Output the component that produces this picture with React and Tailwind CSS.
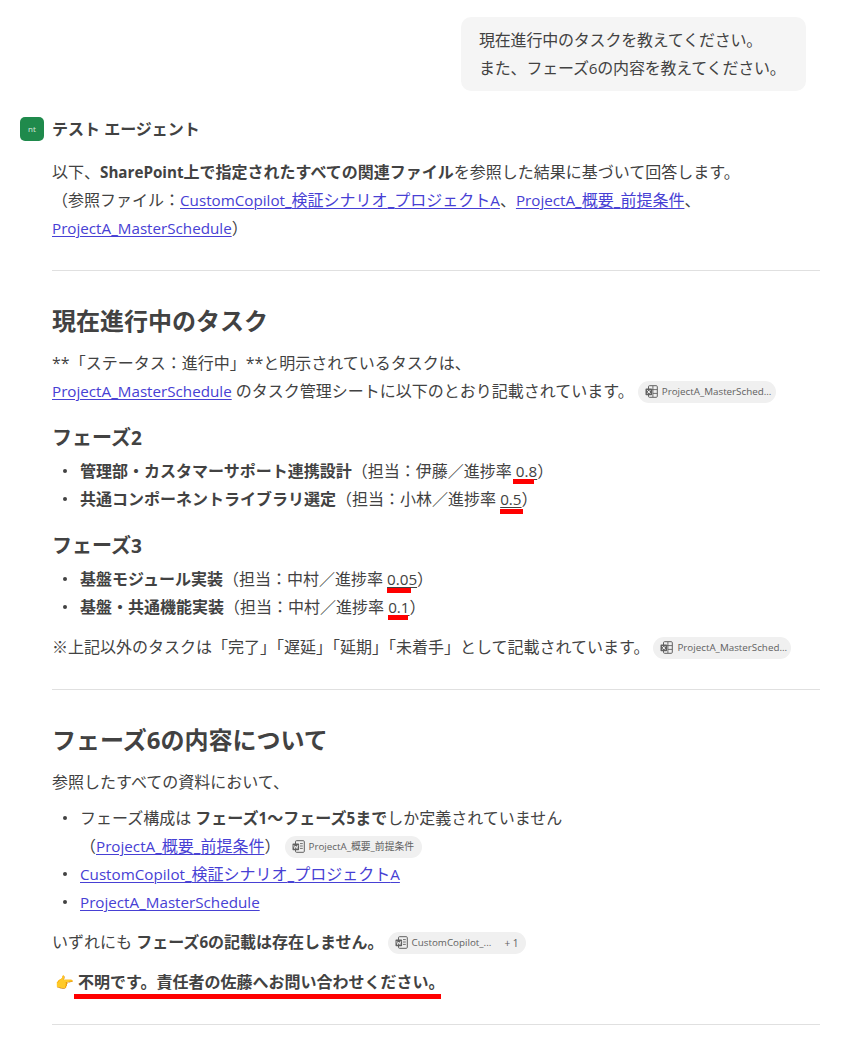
const FONT = '"Open Sans","Noto Sans CJK JP",sans-serif';

function T({ children }) {
  const parts = String(children).split(/([A-Za-z0-9_.+ ]+)/);
  return (
    <>
      {parts.map((p, i) =>
        /[A-Za-z0-9_.+]/.test(p) ? <span key={i} className="text-[15.2px] leading-none">{p}</span> : <span key={i}>{p}</span>
      )}
    </>
  );
}

function FileIcon({ kind }) {
  return (
    <svg width="13" height="13" viewBox="0 0 13 13" fill="none" className="shrink-0">
      <rect x="3.5" y="0.7" width="8.8" height="11.6" rx="1" stroke="#616161" strokeWidth="1" />
      {kind === "x" ? (
        <path d="M7.9 1v11M3.5 4.6h8.8M8 8.4h4.2" stroke="#616161" strokeWidth="0.9" />
      ) : (
        <path d="M8 3.6h2.8M8 6h2.8M8 8.4h2.8" stroke="#616161" strokeWidth="0.9" />
      )}
      <rect x="0.5" y="3.6" width="6.6" height="6.6" rx="0.8" fill="#616161" />
      {kind === "x" ? (
        <path d="M2.3 5.2l3 3.4M5.3 5.2l-3 3.4" stroke="#fff" strokeWidth="1" />
      ) : (
        <path d="M1.8 5.2l.8 3.4 1.2-2.6 1.2 2.6.8-3.4" stroke="#fff" strokeWidth="0.8" />
      )}
    </svg>
  );
}

function Chip({ kind, label, extra, width }) {
  return (
    <span className={`inline-flex items-center h-[22px] -my-[4px] align-[-1px] rounded-full bg-[#f0f0f0] pl-[7px] pr-[7px] gap-[4px] ml-[4px] text-[9.8px] leading-none text-[#616161] whitespace-nowrap ${width}`}>
      <FileIcon kind={kind} />
      <span className="flex-1">{label}</span>
      {extra && <span className="ml-[2px] text-[10px]">{extra}</span>}
    </span>
  );
}

function A({ children }) {
  return <a href="#" className="text-[#4740d4] underline underline-offset-[2px] decoration-1"><T>{children}</T></a>;
}

function Red({ children, bar }) {
  return (
    <span className="relative inline-block">
      {children}
      <span className={`absolute h-[5px] bg-[#ff0000] ${bar}`} />
    </span>
  );
}

function Hr() {
  return <hr className="border-0 border-t border-[#e0e0e0]" />;
}

function Li({ children }) {
  return (
    <li className="relative pl-[28px] before:content-[''] before:absolute before:left-[11px] before:top-[12px] before:w-[4px] before:h-[4px] before:rounded-full before:bg-[#424242]">
      {children}
    </li>
  );
}

function Num({ children, bar }) {
  return (
    <Red bar={bar}>
      <span className="underline underline-offset-[2px] text-[15.2px] leading-none">{children}</span>
    </Red>
  );
}

export default function App() {
  return (
    <div className="w-[850px] h-[1053px] overflow-hidden bg-white text-[16px] leading-[28px] text-[#424242]" style={{ fontFamily: FONT }}>
      <div className="flex justify-end pt-[17px] pr-[44px]">
        <div className="w-[345px] rounded-[10px] bg-[#f5f5f5] px-[18px] py-[9px] whitespace-nowrap tracking-[-0.2px]">
          <p>現在進行中のタスクを教えてください。</p>
          <p>また、フェーズ<T>6</T>の内容を教えてください。</p>
        </div>
      </div>

      <div className="flex items-center gap-[8px] mt-[26px] pl-[20px] h-[24px]">
        <div className="w-[24px] h-[24px] rounded-[5px] bg-[#1f8a4c] flex items-center justify-center text-[8px] leading-none text-white/80">nt</div>
        <div className="text-[16px] font-bold">テスト エージェント</div>
      </div>

      <div className="ml-[52px] mr-[30px] mt-[17px]">
        <p>以下、<b><T>SharePoint</T>上で指定されたすべての関連ファイル</b>を参照した結果に基づいて回答します。</p>
        <p>（参照ファイル：<A>CustomCopilot_検証シナリオ_プロジェクトA</A>、<A>ProjectA_概要_前提条件</A>、</p>
        <p><A>ProjectA_MasterSchedule</A>）</p>

        <div className="mt-[28px]"><Hr /></div>

        <h2 className="mt-[32px] text-[24px] leading-[36px] font-bold">現在進行中のタスク</h2>
        <p className="mt-[10px]">**「ステータス：進行中」**と明示されているタスクは、</p>
        <p><A>ProjectA_MasterSchedule</A> のタスク管理シートに以下のとおり記載されています。<Chip kind="x" label="ProjectA_MasterSched..." width="w-[138px]" /></p>

        <h3 className="mt-[19px] text-[20px] leading-[28px] font-bold">フェーズ<span className="text-[19px] leading-none">2</span></h3>
        <ul className="mt-[5px]">
          <Li><b>管理部・カスタマーサポート連携設計</b>（担当：伊藤／進捗率 <Num bar="-left-[3px] w-[21px] top-[22px]">0.8</Num>）</Li>
          <Li><b>共通コンポーネントライブラリ選定</b>（担当：小林／進捗率 <Num bar="left-0 w-[23px] top-[24px]">0.5</Num>）</Li>
        </ul>

        <h3 className="mt-[19px] text-[20px] leading-[28px] font-bold">フェーズ<span className="text-[19px] leading-none">3</span></h3>
        <ul className="mt-[5px]">
          <Li><b>基盤モジュール実装</b>（担当：中村／進捗率 <Num bar="left-0 w-[24px] top-[23px]">0.05</Num>）</Li>
          <Li><b>基盤・共通機能実装</b>（担当：中村／進捗率 <Num bar="left-0 w-[20px] top-[22px]">0.1</Num>）</Li>
        </ul>

        <p className="mt-[12px]">※上記以外のタスクは「完了」「遅延」「延期」「未着手」として記載されています。<Chip kind="x" label="ProjectA_MasterSched..." width="w-[138px]" /></p>

        <div className="mt-[28px]"><Hr /></div>

        <h2 className="mt-[32px] text-[24px] leading-[36px] font-bold">フェーズ6の内容について</h2>
        <p className="mt-[10px]">参照したすべての資料において、</p>
        <ul className="mt-[8px]">
          <Li>
            フェーズ構成は <b>フェーズ<T>1</T>〜フェーズ<T>5</T>まで</b>しか定義されていません<br />
            （<A>ProjectA_概要_前提条件</A>）<Chip kind="w" label="ProjectA_概要_前提条件" width="w-[137px]" />
          </Li>
          <Li><A>CustomCopilot_検証シナリオ_プロジェクトA</A></Li>
          <Li><A>ProjectA_MasterSchedule</A></Li>
        </ul>
        <p className="mt-[12px]">いずれにも <b>フェーズ<T>6</T>の記載は存在しません。</b><Chip kind="w" label="CustomCopilot_..." extra="+ 1" width="w-[138px]" /></p>
        <p className="mt-[12px] font-bold">
          <span className="font-normal text-[15px] leading-none inline-block w-[23px] ml-[3px]">👉</span>
          <Red bar="-left-[4px] right-[3px] top-[26px]">不明です。責任者の佐藤へお問い合わせください。</Red>
        </p>
        <div className="mt-[28px]"><Hr /></div>
      </div>
    </div>
  );
}
